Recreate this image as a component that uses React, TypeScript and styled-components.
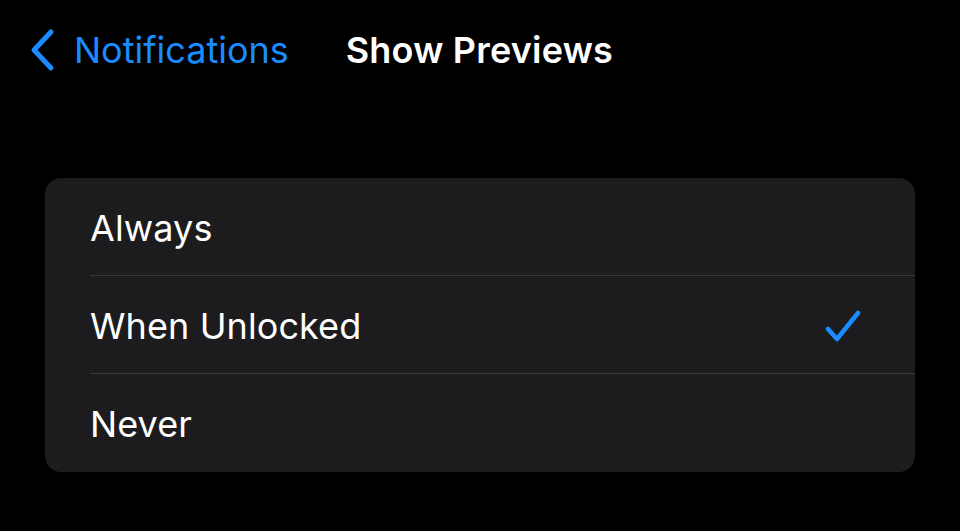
import styled, { createGlobalStyle } from "styled-components";

const GlobalStyle = createGlobalStyle`
  html, body {
    margin: 0;
    padding: 0;
    background: #000;
  }
  body {
    font-family: Inter, "Noto Sans", "Liberation Sans", sans-serif;
    -webkit-font-smoothing: antialiased;
  }
`;

const options = ["Always", "When Unlocked", "Never"];
const selected = "When Unlocked";

export default function App() {
  return (
    <>
      <GlobalStyle />
      <StyledScreen>
        <StyledNavBar>
          <StyledBackButton>
            <svg width="26" height="44" viewBox="0 0 26 44" fill="none">
              <path
                d="M22 4 L5 22 L22 40"
                stroke="#1a8cff"
                strokeWidth="5"
                strokeLinecap="round"
                strokeLinejoin="round"
              />
            </svg>
            <span>Notifications</span>
          </StyledBackButton>
          <StyledTitle>Show Previews</StyledTitle>
        </StyledNavBar>
        <StyledGroup>
          {options.map((option, i) => (
            <StyledRow key={option} $last={i === options.length - 1}>
              <StyledLabel>{option}</StyledLabel>
              {option === selected && (
                <svg width="36" height="34" viewBox="0 0 36 34" fill="none">
                  <path
                    d="M3 20 L12 30 L33 4"
                    stroke="#1a8cff"
                    strokeWidth="4.5"
                    strokeLinecap="round"
                    strokeLinejoin="round"
                  />
                </svg>
              )}
            </StyledRow>
          ))}
        </StyledGroup>
      </StyledScreen>
    </>
  );
}

const StyledScreen = styled.div`
  width: 960px;
  height: 531px;
  background: #000;
  display: flex;
  flex-direction: column;
  box-sizing: border-box;
  padding: 28px 45px 0 29px;
`;

const StyledNavBar = styled.div`
  display: flex;
  align-items: center;
  height: 44px;
  gap: 57px;
`;

const StyledBackButton = styled.div`
  display: flex;
  align-items: center;
  gap: 19px;
  color: #1a8cff;
  font-size: 36px;
`;

const StyledTitle = styled.div`
  color: #fff;
  font-size: 36px;
  font-weight: 600;
  letter-spacing: 0.2px;
`;

const StyledGroup = styled.div`
  margin-top: 106px;
  margin-left: 16px;
  background: #1c1c1e;
  border-radius: 16px;
  overflow: hidden;
`;

const StyledRow = styled.div<{ $last: boolean }>`
  height: 98px;
  margin-left: 45px;
  padding-right: 54px;
  padding-top: 2px;
  display: flex;
  align-items: center;
  justify-content: space-between;
  box-sizing: border-box;
  border-bottom: ${(p) => (p.$last ? "none" : "1px solid #38383a")};
`;

const StyledLabel = styled.span`
  color: #fff;
  font-size: 36px;
  letter-spacing: 0.1px;
`;
